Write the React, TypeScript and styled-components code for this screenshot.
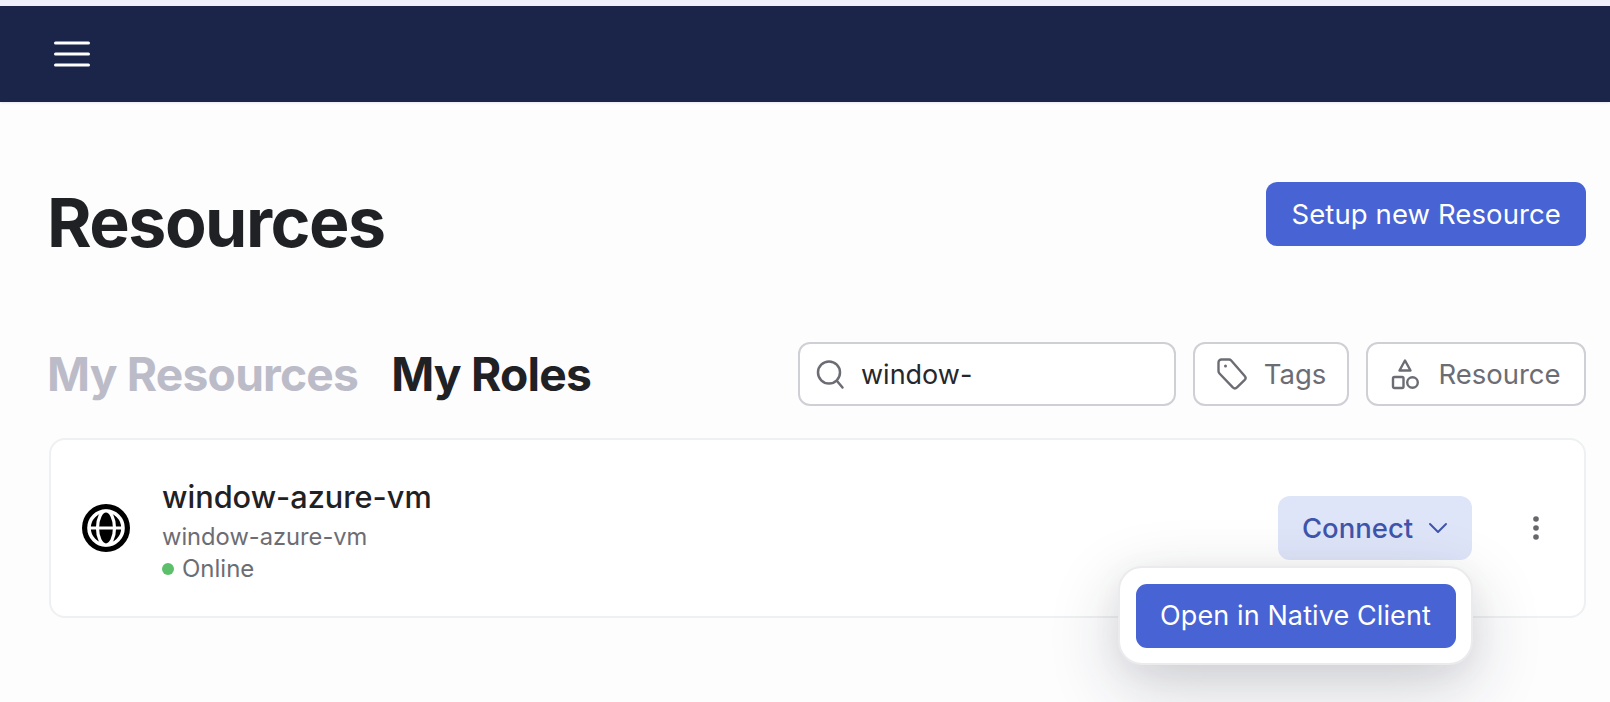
import React from "react";
import styled, { createGlobalStyle } from "styled-components";

const Global = createGlobalStyle`
  html, body { margin: 0; padding: 0; background: #fdfdfe; height: 702px; overflow: hidden; }
  body { font-family: Inter, "Liberation Sans", sans-serif; color: #1f2125; }
  * { box-sizing: border-box; }
`;

const Page = styled.div`
  width: 1610px;
  height: 702px;
  padding-top: 6px;
  background: linear-gradient(#eef0f9 0, #eef0f9 6px, #fdfdfe 6px);
  overflow: hidden;
`;
const TopBar = styled.header`
  height: 96px;
  background: #1b2549;
  display: flex;
  align-items: center;
  padding-left: 54px;
  box-shadow: 0 1px 2px rgba(60, 80, 140, 0.12);
`;
const Burger = styled.svg`
  width: 36px;
  height: 26px;
  display: block;
  margin-top: -1px;
`;
const Main = styled.main`
  padding: 80px 24px 0 49px;
`;
const TitleRow = styled.div`
  display: flex;
  justify-content: space-between;
  align-items: flex-start;
  height: 160px;
`;
const Title = styled.h1`
  margin: 0 0 0 -2px;
  font-size: 68px;
  line-height: 80px;
  font-weight: 700;
  letter-spacing: -1.5px;
  color: #1f2125;
`;
const PrimaryButton = styled.button`
  height: 64px;
  border: none;
  border-radius: 11px;
  background: #4763d4;
  color: #fff;
  font: 400 27.5px Inter, sans-serif;
  letter-spacing: 0.1px;
  white-space: nowrap;
  padding: 0 25px;
  display: flex;
  align-items: center;
`;
const ToolRow = styled.div`
  display: flex;
  align-items: center;
  justify-content: space-between;
  height: 64px;
`;
const Tabs = styled.nav`
  display: flex;
  gap: 33px;
  margin-left: -2px;
`;
const Tab = styled.span<{ $active?: boolean }>`
  font-size: 46.2px;
  line-height: 60px;
  font-weight: 700;
  letter-spacing: -0.8px;
  color: ${(p) => (p.$active ? "#1f2125" : "#bcbcc9")};
`;
const Filters = styled.div`
  display: flex;
  gap: 17px;
`;
const SearchBox = styled.div`
  width: 378px;
  height: 64px;
  background: #fff;
  border: 2px solid #cfcfd6;
  border-radius: 12px;
  display: flex;
  align-items: center;
  padding-left: 14px;
  gap: 15px;
  font-size: 27px;
  color: #26272b;
`;
const FilterButton = styled.button<{ $w: number; $gap: number }>`
  width: ${(p) => p.$w}px;
  height: 64px;
  background: #fff;
  border: 2px solid #cfcfd6;
  border-radius: 12px;
  display: flex;
  align-items: center;
  justify-content: center;
  gap: ${(p) => p.$gap}px;
  font: 400 27.5px Inter, sans-serif;
  color: #6c6d74;
  padding: 0;
`;
const Card = styled.section`
  position: relative;
  margin-top: 32px;
  height: 180px;
  background: #fff;
  border: 2px solid #eef0f1;
  border-radius: 16px;
  display: flex;
  align-items: center;
  padding: 0 44px 0 31px;
`;
const Globe = styled.svg`
  width: 48px;
  height: 48px;
  display: block;
  flex: none;
`;
const Info = styled.div`
  margin-left: 32px;
  display: flex;
  flex-direction: column;
  margin-top: 6px;
`;
const Name = styled.div`
  font-size: 30.7px;
  line-height: 38px;
  font-weight: 500;
  color: #1f2125;
`;
const Sub = styled.div`
  margin-top: 6px;
  font-size: 23.7px;
  line-height: 30px;
  color: #6c6d74;
`;
const Status = styled.div`
  display: flex;
  align-items: center;
  gap: 8px;
  font-size: 24px;
  line-height: 30px;
  margin-top: 2px;
  color: #6c6d74;
`;
const Dot = styled.i`
  width: 12px;
  height: 12px;
  border-radius: 50%;
  background: #5cc06b;
  display: block;
`;
const Actions = styled.div`
  margin-left: auto;
  display: flex;
  align-items: center;
  gap: 60px;
`;
const ConnectButton = styled.button`
  width: 194px;
  height: 64px;
  border: none;
  border-radius: 12px;
  background: #dfe5f9;
  color: #3f55ab;
  font: 500 27.5px Inter, sans-serif;
  display: flex;
  align-items: center;
  justify-content: center;
  gap: 15px;
  padding: 0;
`;
const Kebab = styled.svg`
  width: 8px;
  height: 26px;
  display: block;
  flex: none;
`;
const Popover = styled.div`
  position: absolute;
  left: 1067px;
  top: 126px;
  width: 355px;
  height: 99px;
  background: #fff;
  border: 2px solid #ebebee;
  border-radius: 24px;
  display: flex;
  align-items: center;
  justify-content: center;
  box-shadow: 0 22px 70px rgba(30, 35, 50, 0.2), 0 6px 30px rgba(30, 35, 50, 0.05);
`;
const MenuItem = styled(PrimaryButton)`
  width: 320px;
  justify-content: center;
  padding: 0;
  font-size: 27px;
`;

export default function App() {
  return (
    <Page>
      <Global />
      <TopBar>
        <Burger viewBox="0 0 36 26" fill="none" stroke="#fff" strokeWidth="3" strokeLinecap="round">
          <path d="M1.5 2h33M1.5 13h33M1.5 24h33" />
        </Burger>
      </TopBar>
      <Main>
        <TitleRow>
          <Title>Resources</Title>
          <PrimaryButton>Setup new Resource</PrimaryButton>
        </TitleRow>
        <ToolRow>
          <Tabs>
            <Tab>My Resources</Tab>
            <Tab $active>My Roles</Tab>
          </Tabs>
          <Filters>
            <SearchBox>
              <svg width="32" height="32" viewBox="0 0 32 32" fill="none" stroke="#6c6d74" strokeWidth="2.5" strokeLinecap="round">
                <circle cx="15" cy="14.5" r="11" />
                <path d="M23 23l5.5 6.5" />
              </svg>
              window-
            </SearchBox>
            <FilterButton $w={156} $gap={16}>
              <svg width="32" height="36" viewBox="0 0 32 36" fill="none" stroke="#6c6d74" strokeWidth="2.4" strokeLinejoin="round">
                <path d="M2.5 6.5a3 3 0 0 1 3-3h7.5a3 3 0 0 1 2.2 1l13.5 15.5a3 3 0 0 1-.2 4.2l-7.5 7.2a3 3 0 0 1-4.2 0L3.5 17.5a3.5 3.5 0 0 1-1-2.5z" />
                <circle cx="9.5" cy="10" r="1.5" fill="#6c6d74" stroke="none" />
              </svg>
              Tags
            </FilterButton>
            <FilterButton $w={220} $gap={19}>
              <svg width="28" height="32" viewBox="0 0 28 32" fill="none" stroke="#6c6d74" strokeWidth="2.4" strokeLinejoin="round">
                <path d="M14 2.5l5.5 10h-11z" />
                <rect x="2" y="19" width="10.5" height="11" rx="1.5" />
                <circle cx="21.5" cy="24.5" r="5.3" />
              </svg>
              Resource
            </FilterButton>
          </Filters>
        </ToolRow>
        <Card>
          <Globe viewBox="0 0 48 48">
            <circle cx="24" cy="24" r="24" fill="#000" />
            <circle cx="24" cy="24" r="17" fill="none" stroke="#fff" strokeWidth="3.6" />
            <ellipse cx="24" cy="24" rx="8.5" ry="17" fill="#000" stroke="#fff" strokeWidth="3.2" />
            <path d="M7 24h34" stroke="#fff" strokeWidth="3.2" />
          </Globe>
          <Info>
            <Name>window-azure-vm</Name>
            <Sub>window-azure-vm</Sub>
            <Status>
              <Dot />
              Online
            </Status>
          </Info>
          <Actions>
            <ConnectButton>
              Connect
              <svg width="20" height="12" viewBox="0 0 20 12" fill="none" stroke="#3f55ab" strokeWidth="2" strokeLinecap="round" strokeLinejoin="round">
                <path d="M2 2l8 8 8-8" />
              </svg>
            </ConnectButton>
            <Kebab viewBox="0 0 8 26" fill="#66676c">
              <circle cx="4" cy="4" r="2.8" />
              <circle cx="4" cy="13" r="2.8" />
              <circle cx="4" cy="22" r="2.8" />
            </Kebab>
          </Actions>
          <Popover>
            <MenuItem>Open in Native Client</MenuItem>
          </Popover>
        </Card>
      </Main>
    </Page>
  );
}
